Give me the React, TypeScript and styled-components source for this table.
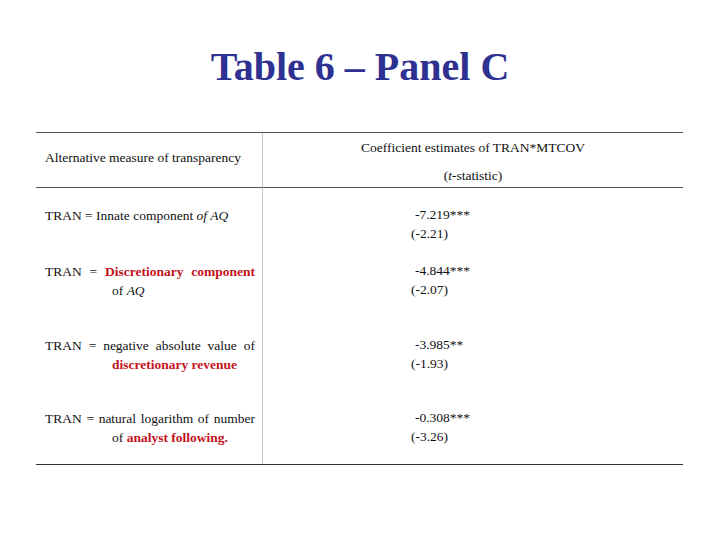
import React from "react";
import styled, { createGlobalStyle } from "styled-components";

const Global = createGlobalStyle`
  html, body { margin: 0; padding: 0; background: #fff; }
  body { width: 720px; height: 540px; overflow: hidden; font-family: "Liberation Serif", "Times New Roman", serif; }
`;

const Slide = styled.div`
  width: 720px;
  height: 540px;
  display: flex;
  flex-direction: column;
  padding-top: 42px;
  box-sizing: border-box;
`;

const Title = styled.h1`
  margin: 0;
  font-family: "Liberation Serif", "Times New Roman", serif;
  font-weight: bold;
  font-size: 40px;
  line-height: 50px;
  color: #2e3192;
  text-align: center;
`;

const Table = styled.div`
  margin-top: 40px;
  margin-left: 36px;
  width: 647px;
  display: grid;
  grid-template-columns: 227px 1fr;
  border-top: 1.5px solid #555;
  border-bottom: 1.5px solid #333;
  font-size: 13.5px;
  color: #111;
`;

const Cell = styled.div<{ $h: number; $divider?: boolean; $rule?: boolean }>`
  height: ${(p) => p.$h}px;
  box-sizing: border-box;
  border-right: ${(p) => (p.$divider ? "1px solid #c8c8c8" : "none")};
  border-bottom: ${(p) => (p.$rule ? "1.5px solid #555" : "none")};
`;

const HeadLeft = styled(Cell)`
  display: flex;
  align-items: center;
  padding-left: 9px;
  padding-bottom: 4px;
`;

const HeadRight = styled(Cell)`
  display: flex;
  flex-direction: column;
  align-items: center;
  padding-top: 1px;
  line-height: 28px;
`;

const LeftBody = styled(Cell)`
  padding: 19px 7px 0 9px;
  line-height: 18.5px;
`;

const Line = styled.div<{ $indent?: number }>`
  padding-left: ${(p) => p.$indent ?? 0}px;
  white-space: nowrap;
`;

const JLine = styled.div`
  display: flex;
  justify-content: space-between;
  white-space: nowrap;
`;

const Red = styled.span`
  color: #c3121c;
  font-weight: bold;
  font-family: "Liberation Serif", "Times New Roman", serif;
`;

const RightBody = styled(Cell)`
  padding: 17px 0 0 148px;
  line-height: 19px;
`;

const Coef = styled.div`
  padding-left: 4px;
`;

type Row = { h: number; left: React.ReactNode; coef: string; t: string };

const words = (s: string) => s.split(" ").map((w, i) => <span key={i}>{w}</span>);

const rows: Row[] = [
  {
    h: 56,
    left: (
      <Line>
        TRAN = Innate component <i>of AQ</i>
      </Line>
    ),
    coef: "-7.219***",
    t: "(-2.21)",
  },
  {
    h: 74,
    left: (
      <>
        <JLine>
          <span>TRAN</span>
          <span>=</span>
          <Red>Discretionary</Red>
          <Red>component</Red>
        </JLine>
        <Line $indent={67}>
          of <i>AQ</i>
        </Line>
      </>
    ),
    coef: "-4.844***",
    t: "(-2.07)",
  },
  {
    h: 73,
    left: (
      <>
        <JLine>{words("TRAN = negative absolute value of")}</JLine>
        <Line $indent={67}>
          <Red>discretionary revenue</Red>
        </Line>
      </>
    ),
    coef: "-3.985**",
    t: "(-1.93)",
  },
  {
    h: 73,
    left: (
      <>
        <JLine>{words("TRAN = natural logarithm of number")}</JLine>
        <Line $indent={67}>
          of <Red>analyst following.</Red>
        </Line>
      </>
    ),
    coef: "-0.308***",
    t: "(-3.26)",
  },
];

export default function App() {
  return (
    <>
      <Global />
      <Slide>
        <Title>Table 6 – Panel C</Title>
        <Table>
          <HeadLeft $h={55} $divider $rule>
            Alternative measure of transparency
          </HeadLeft>
          <HeadRight $h={55} $rule>
            <div>Coefficient estimates of TRAN*MTCOV</div>
            <div>
              (<i>t</i>-statistic)
            </div>
          </HeadRight>
          {rows.map((r, i) => (
            <React.Fragment key={i}>
              <LeftBody $h={r.h} $divider>
                {r.left}
              </LeftBody>
              <RightBody $h={r.h}>
                <Coef>{r.coef}</Coef>
                <div>{r.t}</div>
              </RightBody>
            </React.Fragment>
          ))}
        </Table>
      </Slide>
    </>
  );
}
